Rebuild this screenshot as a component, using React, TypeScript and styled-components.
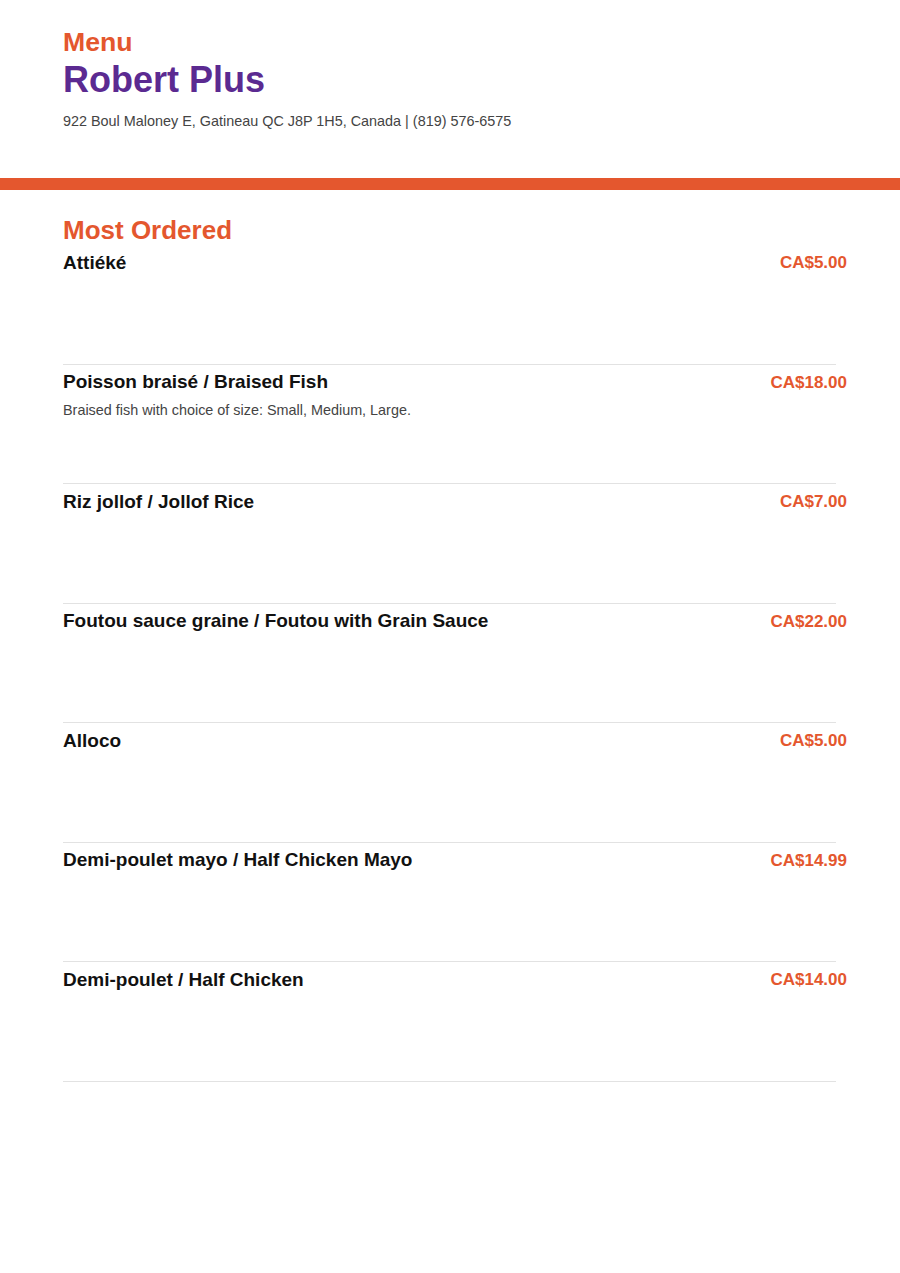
import React from "react";
import styled, { createGlobalStyle } from "styled-components";

const Global = createGlobalStyle`
  html, body { margin: 0; padding: 0; background: #fff; }
  body { font-family: "Liberation Sans", Arial, sans-serif; }
`;

const Page = styled.div`
  width: 900px;
  min-height: 1273px;
  background: #fff;
`;

const Header = styled.header`
  padding: 27px 53px 48px 63px;
  display: flex;
  flex-direction: column;
`;

const Kicker = styled.div`
  color: #e4572e;
  font-size: 26.67px;
  font-weight: 700;
  line-height: 30px;
`;

const Title = styled.h1`
  margin: 2px 0 0;
  color: #5b2a91;
  font-size: 36px;
  font-weight: 700;
  line-height: 42px;
`;

const Address = styled.div`
  margin-top: 12px;
  color: #444;
  font-size: 14.4px;
  line-height: 17px;
`;

const Bar = styled.div`
  height: 12px;
  background: #e4572e;
`;

const Section = styled.section`
  padding: 25px 53px 0 63px;
`;

const SectionTitle = styled.h2`
  margin: 0;
  color: #e4572e;
  font-size: 26px;
  font-weight: 700;
  line-height: 30px;
`;

const Item = styled.div`
  box-sizing: border-box;
  height: 119.5px;
  padding-top: 6px;
  display: flex;
  flex-direction: column;
`;

const ItemRow = styled.div`
  display: flex;
  justify-content: space-between;
  align-items: center;
`;

const Name = styled.div`
  color: #111;
  font-size: 19px;
  font-weight: 700;
  line-height: 22px;
`;

const Price = styled.div`
  color: #e4572e;
  font-size: 17px;
  font-weight: 700;
  line-height: 23px;
`;

const Desc = styled.div`
  margin-top: 8px;
  color: #444;
  font-size: 14.4px;
  line-height: 16px;
`;

const Divider = styled.div`
  margin-top: auto;
  margin-right: 11px;
  height: 1px;
  background: #e2e2e2;
`;

const items: { name: string; price: string; desc?: string }[] = [
  { name: "Attiéké", price: "CA$5.00" },
  {
    name: "Poisson braisé / Braised Fish",
    price: "CA$18.00",
    desc: "Braised fish with choice of size: Small, Medium, Large.",
  },
  { name: "Riz jollof / Jollof Rice", price: "CA$7.00" },
  { name: "Foutou sauce graine / Foutou with Grain Sauce", price: "CA$22.00" },
  { name: "Alloco", price: "CA$5.00" },
  { name: "Demi-poulet mayo / Half Chicken Mayo", price: "CA$14.99" },
  { name: "Demi-poulet / Half Chicken", price: "CA$14.00" },
];

export default function App() {
  return (
    <Page>
      <Global />
      <Header>
        <Kicker>Menu</Kicker>
        <Title>Robert Plus</Title>
        <Address>922 Boul Maloney E, Gatineau QC J8P 1H5, Canada | (819) 576-6575</Address>
      </Header>
      <Bar />
      <Section>
        <SectionTitle>Most Ordered</SectionTitle>
        {items.map((it) => (
          <Item key={it.name}>
            <ItemRow>
              <Name>{it.name}</Name>
              <Price>{it.price}</Price>
            </ItemRow>
            {it.desc && <Desc>{it.desc}</Desc>}
            <Divider />
          </Item>
        ))}
      </Section>
    </Page>
  );
}
